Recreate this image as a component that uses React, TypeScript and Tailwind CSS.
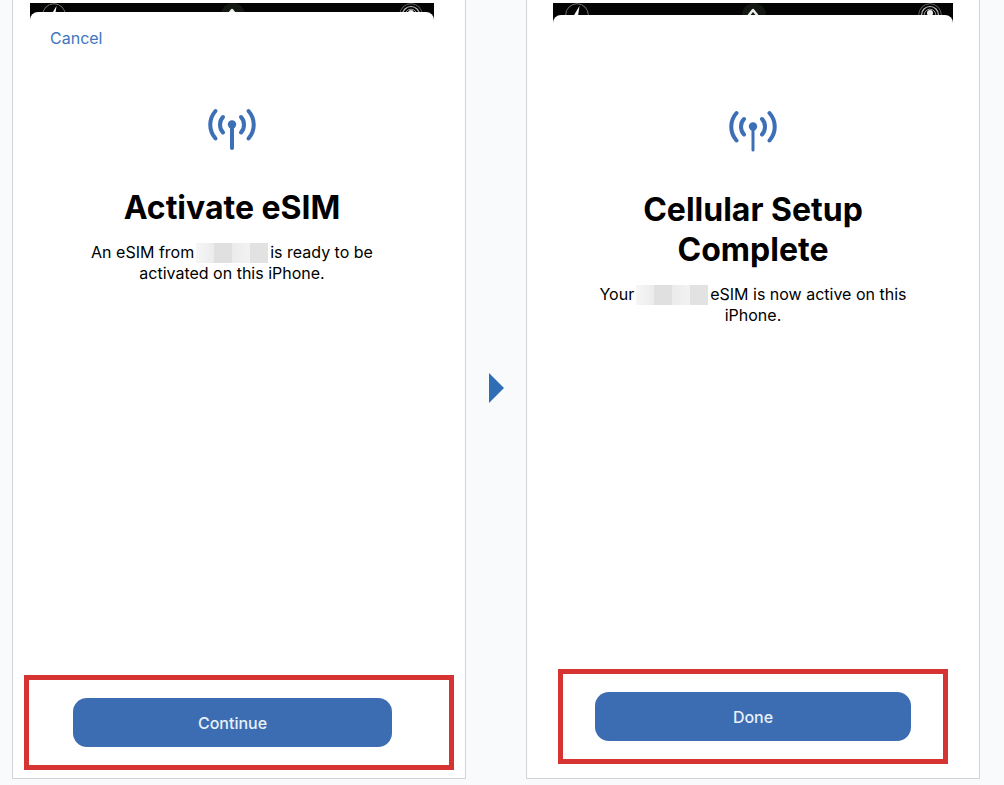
import type { ReactNode } from 'react'

export default function App() {
  return (
    <main className="flex min-h-screen bg-[#f9fafc] pr-6 pb-1.5 pl-3 font-['Inter','Liberation_Sans',sans-serif] text-black">
      <Panel>
        <Sheet className="mr-[31px] ml-[17px]" stripClassName="h-[9px]">
          <div className="mt-1.5 flex h-6 items-center px-5">
            <button type="button" className="text-base leading-6 text-[#3f76bd]">
              Cancel
            </button>
          </div>
          <SetupMessage
            className="mt-14"
            title="Activate eSIM"
            before="An eSIM from"
            after="is ready to be"
            lastLine="activated on this iPhone."
            stemWidth={4}
          />
        </Sheet>
        <ActionFrame className="mx-[11px] mb-2 pr-[57px] pl-11" label="Continue" />
      </Panel>

      <div className="flex w-[60px] shrink-0 items-center justify-center pb-1">
        <svg className="h-[30px] w-[15px]" viewBox="0 0 15 30" aria-hidden="true">
          <path d="M0 0 15 15 0 30Z" fill="#2f6eb5" />
        </svg>
      </div>

      <Panel>
        <Sheet className="mx-[26px]" stripClassName="h-3">
          <SetupMessage
            className="mt-[85px]"
            title={
              <>
                Cellular Setup
                <br />
                Complete
              </>
            }
            before="Your"
            after="eSIM is now active on this"
            lastLine="iPhone."
            stemWidth={3}
          />
        </Sheet>
        <ActionFrame className="mx-[31px] mb-3.5 px-8" label="Done" />
      </Panel>
    </main>
  )
}

function Panel({ children }: { children: ReactNode }) {
  return (
    <section className="flex min-w-0 flex-1 flex-col border-x border-b border-[#d0d5da] bg-white pt-[3px]">
      {children}
    </section>
  )
}

type SheetProps = {
  className: string
  stripClassName: string
  children: ReactNode
}

function Sheet({ className, stripClassName, children }: SheetProps) {
  return (
    <div className={`flex flex-1 flex-col ${className}`}>
      <div className="bg-[#050404]">
        <div className={`flex items-start justify-between overflow-hidden pr-[11px] pl-3 ${stripClassName}`}>
          <svg className="size-6 shrink-0" viewBox="0 0 24 24" fill="none" aria-hidden="true">
            <circle cx="12" cy="12" r="11.3" stroke="#77756f" strokeWidth="1" />
            <path d="M14.5 3 8.500 13h4.500Z" fill="#fff" />
          </svg>
          <svg className="size-6 shrink-0" viewBox="0 0 24 24" fill="none" aria-hidden="true">
            <circle cx="12" cy="12" r="12" fill="#141812" />
            <path d="m7 12 4-5 4 5" stroke="#eee" strokeWidth="2.500" strokeLinecap="round" strokeLinejoin="round" />
          </svg>
          <svg className="size-6 shrink-0" viewBox="0 0 24 24" fill="none" aria-hidden="true">
            <circle cx="12" cy="12" r="11.3" stroke="#66635f" strokeWidth="1" />
            <circle cx="12" cy="12" r="8.500" stroke="#bbb" strokeWidth="1.2" />
            <circle cx="12" cy="12" r="5.800" stroke="#999" strokeWidth="1" />
            <circle cx="12" cy="10" r="3" fill="#eee" />
          </svg>
        </div>
        <div className="h-2 rounded-t-lg bg-white" />
      </div>
      {children}
    </div>
  )
}

type SetupMessageProps = {
  className: string
  title: ReactNode
  before: string
  after: string
  lastLine: string
  stemWidth: number
}

function SetupMessage({ className, title, before, after, lastLine, stemWidth }: SetupMessageProps) {
  return (
    <div className={`flex flex-col items-center text-center ${className}`}>
      <AntennaIcon stemWidth={stemWidth} />
      <h1 className="mt-9 text-[32px] leading-10 font-bold">{title}</h1>
      <p className="mt-3.5 text-base leading-[21px]">
        <span className="flex items-center justify-center">
          {before}
          <HiddenCarrier />
          {after}
        </span>
        {lastLine}
      </p>
    </div>
  )
}

function AntennaIcon({ stemWidth }: { stemWidth: number }) {
  return (
    <svg
      className="mt-0.5 h-11 w-12"
      viewBox="0 0 48 44"
      fill="none"
      stroke="#3c6fb5"
      strokeWidth="4"
      strokeLinecap="round"
      aria-hidden="true"
    >
      <path d="M24 18v22" strokeWidth={stemWidth} />
      <circle cx="24" cy="16.500" r="4.200" fill="#3c6fb5" stroke="none" />
      <path d="M15 9C11 13 11 20.500 15 24.500M33 9C37 13 37 20.500 33 24.500" />
      <path d="M7.500 3C0.500 11 0.500 22.500 7.500 30.500M40.500 3C47.500 11 47.500 22.500 40.500 30.500" />
    </svg>
  )
}

// pixelated blocks standing in for the carrier name
function HiddenCarrier() {
  return (
    <span className="mx-0.5 flex h-5 w-[72px]" aria-hidden="true">
      <span className="flex-1 bg-linear-to-r from-[#f6f6f6] to-[#ececec]" />
      <span className="flex-1 bg-[#e0e0e0]" />
      <span className="flex-1 bg-linear-to-r from-[#ebebeb] to-[#f2f2f2]" />
      <span className="flex-1 bg-[#e2e2e2]" />
    </span>
  )
}

function ActionFrame({ className, label }: { className: string; label: string }) {
  return (
    <div className={`border-[5px] border-[#d63432] py-[18px] ${className}`}>
      <button type="button" className="h-[49px] w-full rounded-[14px] bg-[#3c6db2] text-base font-medium text-[#e8f0f8]">
        {label}
      </button>
    </div>
  )
}
